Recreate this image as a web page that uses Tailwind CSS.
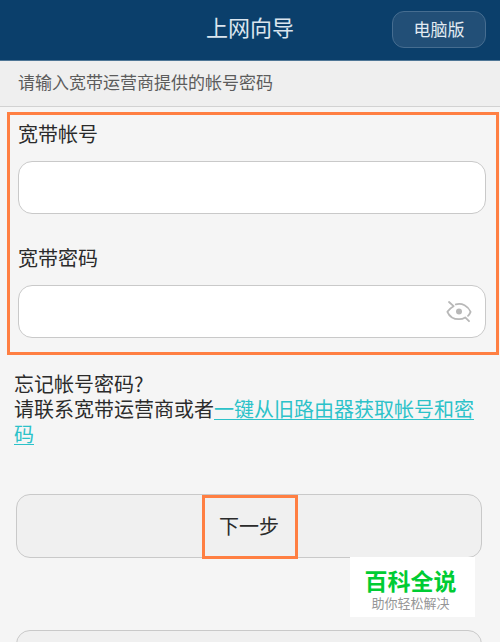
<!DOCTYPE html>
<html lang="zh-CN">
  <head>
    <meta charset="UTF-8" />
    <meta name="viewport" content="width=device-width, initial-scale=1.0" />
    <title>上网向导</title>
    <script src="https://cdn.jsdelivr.net/npm/@tailwindcss/browser@4"></script>
  </head>
  <body>
    <div class="h-screen overflow-hidden bg-[#f5f5f5] text-[#2b2b2b] text-xl font-['Noto_Sans_CJK_SC',sans-serif]">
      <header class="grid grid-cols-[1fr_auto_1fr] items-start h-[61px] pt-[11px] px-[14px] bg-[#0b3f6b] border-b border-[#4f7696]">
        <h1 class="col-start-2 text-[22px] leading-[30px] text-[#dbe5ee]">上网向导</h1>
        <button type="button" class="justify-self-end w-[94px] h-[37px] pb-0.5 rounded-xl border border-[#466d90] bg-[#224f77] text-[17px] text-[#e3ebf2]">电脑版</button>
      </header>
      <p class="h-[46px] pl-[18px] bg-[#efefef] border-b border-[#d2d2d2] text-[17px] leading-[42px] text-[#5c5c5c]">请输入宽带运营商提供的帐号密码</p>

      <main>
        <form>
          <div class="mt-[5px] ml-[7px] mr-px pl-2 pr-[10px] pt-[7px] pb-[14px] border-3 border-[#ff7f42]">
            <label for="account" class="block leading-[24px]">宽带帐号</label>
            <input id="account" type="text" class="block w-full h-[53px] mt-[15px] px-4 rounded-[14px] border border-[#c9c9c9] bg-white" />
            <label for="password" class="block mt-8 leading-[24px]">宽带密码</label>
            <div class="relative mt-[15px]">
              <input id="password" type="password" class="block w-full h-[53px] pl-4 pr-12 rounded-[14px] border border-[#c9c9c9] bg-white" />
              <button type="button" aria-label="显示密码" class="absolute inset-y-0 right-[14px]">
                <svg class="w-[26px] h-[22px]" viewBox="0 0 26 22" fill="none" stroke="#b8b8b8" stroke-width="1.8" stroke-linecap="round" stroke-linejoin="round">
                  <path d="M3 1 L7.6 5.2 C5 6.6 3 8.4 1.4 10.8 C3.4 15.6 8 18.2 13 18.2 C15.4 18.2 17.4 17.6 19.2 16.4 L23 20.2" />
                  <path d="M9.8 3.4 C16 1.6 22 5 24.6 10.8 C24 12.3 23.1 13.8 22 14.8" />
                  <circle cx="13" cy="10.6" r="3" fill="#b8b8b8" stroke="none" />
                </svg>
              </button>
            </div>
          </div>

          <p class="mt-4 px-[14px] leading-[25px]">
            忘记帐号密码?<br />请联系宽带运营商或者<a href="#" class="text-[#2cc2c9] underline decoration-1 underline-offset-2">一键从旧路由器获取帐号和密码</a>
          </p>

          <div class="mt-12 ml-4 mr-[18px]">
            <button type="submit" class="relative block w-full h-16 rounded-[14px] border border-[#c9c9c9] bg-[#f0f0f0]">
              下一步
              <span class="absolute left-0 -right-0.5 top-0 -bottom-0.5 mx-auto w-24 border-3 border-[#ff7f42]"></span>
            </button>
            <button type="button" aria-label="返回" class="block w-full h-16 mt-[72px] rounded-[14px] border border-[#c9c9c9] bg-[#f0f0f0]"></button>
          </div>
        </form>
      </main>

      <!-- site badge -->
      <div class="fixed right-[25px] bottom-[25px] w-[125px] h-[60px] pt-2 pr-1 bg-white text-center">
        <div class="text-[23px] leading-[30px] font-bold text-[#00cc33]">百科全说</div>
        <div class="text-[13px] leading-[15px] text-[#969696]">助你轻松解决</div>
      </div>
    </div>
  </body>
</html>
